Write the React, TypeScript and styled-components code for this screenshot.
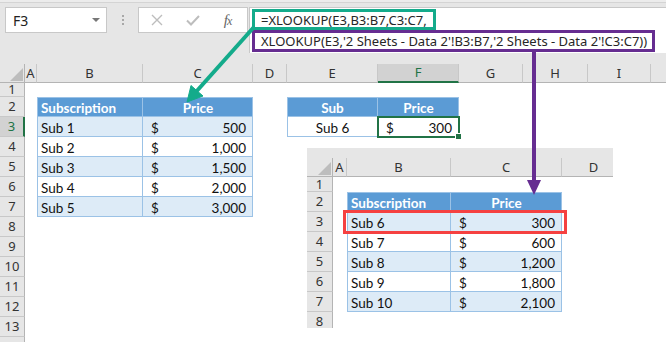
import { Fragment } from 'react'
import styled, { createGlobalStyle } from 'styled-components'

const GlobalStyle = createGlobalStyle`
  html, body { margin: 0; padding: 0; background: #fff; }
  #root { width: 666px; height: 342px; }
`

const CHROME = '#e6e6e6'
const LINE = '#c8c8c8'
const EDGE = '#b4b4b4'
const XL_GREEN = '#217346'
const TEAL = '#14ab8b'
const PURPLE = '#662d91'
const RED = '#f54141'
const BLUE = '#5b9bd5'
const BAND = '#ddebf7'
const TABLE_LINE = '#9bc2e6'
const UI_FONT = `'Noto Sans', 'Open Sans', sans-serif`
const CELL_FONT = `'Lato', 'Liberation Sans', sans-serif`

type Kind = 'head' | 'band' | 'plain'
type Align = 'left' | 'center' | 'money'
type CellSpec = { text: string; kind: Kind; align: Align; edgeL?: boolean; edgeT?: boolean; selected?: boolean }
type Col = { name: string; width: number }

const Page = styled.div`
  position: relative;
  width: 666px;
  height: 342px;
  overflow: hidden;
  background: ${CHROME};
  display: flex;
  flex-direction: column;
`

const TopBar = styled.div`
  flex: none;
  height: 53px;
  box-sizing: border-box;
  padding-top: 7px;
  display: flex;
  align-items: flex-start;
  background: linear-gradient(to bottom, #ececec 0 2px, #d4d4d4 2px 3px, ${CHROME} 3px);
`

const NameBox = styled.div`
  margin-left: 5px;
  width: 102px;
  height: 26px;
  box-sizing: border-box;
  border: 1px solid ${LINE};
  background: #fff;
  display: flex;
  align-items: center;
  justify-content: space-between;
  padding: 0 6px 0 7px;
  font: 14px ${UI_FONT};
  color: #222;
`

const DropArrow = styled.span`
  width: 0;
  height: 0;
  border-left: 4px solid transparent;
  border-right: 4px solid transparent;
  border-top: 4px solid #777;
`

const Grip = styled.div`
  width: 31px;
  padding-top: 8px;
  display: flex;
  flex-direction: column;
  align-items: center;
  gap: 2px;

  span {
    width: 2px;
    height: 2px;
    background: #a8a8a8;
  }
`

const ButtonBox = styled.div`
  width: 110px;
  height: 26px;
  box-sizing: border-box;
  border: 1px solid ${LINE};
  background: #fff;
  display: flex;
`

const IconSlot = styled.div<{ $dark?: boolean }>`
  width: 36px;
  display: flex;
  align-items: center;
  justify-content: center;
  color: ${p => (p.$dark ? '#666' : '#bdbdbd')};
`

const Fx = styled.span`
  font: italic 15px 'Liberation Serif', serif;
  letter-spacing: -1px;
  margin-right: 3px;

  small {
    font-size: 12px;
  }
`

const FormulaArea = styled.div`
  margin-left: 1px;
  flex: 1;
  height: 46px;
  box-sizing: border-box;
  border-top: 1px solid ${LINE};
  border-left: 1px solid ${LINE};
  background: #fff;
  padding: 1px 0 0 2px;
`

const FormulaLine = styled.div<{ $color: string; $width: number; $height: number }>`
  width: ${p => p.$width}px;
  height: ${p => p.$height}px;
  box-sizing: border-box;
  border: 3px solid ${p => p.$color};
  padding-left: 6px;
  display: flex;
  align-items: center;
  white-space: nowrap;
  font: 13px ${UI_FONT};
  color: #262626;
`

const SheetArea = styled.div`
  flex: none;
  padding-top: 11px;
`

const SheetGrid = styled.div<{ $cols: string; $rows: string }>`
  display: grid;
  grid-template-columns: ${p => p.$cols};
  grid-template-rows: ${p => p.$rows};
  background: #fff;
  font: 13px/1 ${UI_FONT};
  color: #333;
`

const Corner = styled.div`
  background: ${CHROME};
  border-right: 1px solid ${EDGE};
  border-bottom: 1px solid ${EDGE};
  display: flex;
  align-items: flex-end;
  justify-content: flex-end;
  padding: 0 1px 1px 0;
`

const ColHead = styled.div<{ $active: boolean }>`
  min-width: 0;
  background: ${p => (p.$active ? '#d2d2d2' : CHROME)};
  color: ${p => (p.$active ? XL_GREEN : '#333')};
  border-right: 1px solid ${LINE};
  border-bottom: ${p => (p.$active ? `2px solid ${XL_GREEN}` : `1px solid ${EDGE}`)};
  display: flex;
  align-items: center;
  justify-content: center;
  overflow: hidden;
`

const RowHead = styled.div<{ $active: boolean }>`
  background: ${p => (p.$active ? '#d2d2d2' : CHROME)};
  color: ${p => (p.$active ? XL_GREEN : '#333')};
  border-right: ${p => (p.$active ? `2px solid ${XL_GREEN}` : `1px solid ${EDGE}`)};
  border-bottom: 1px solid ${LINE};
  display: flex;
  align-items: center;
  justify-content: center;
  overflow: hidden;
`

const cellBg: Record<Kind, string> = { head: BLUE, band: BAND, plain: '#fff' }

const Cell = styled.div<{ $kind?: Kind; $align: Align; $edgeL?: boolean; $edgeT?: boolean }>`
  position: relative;
  min-width: 0;
  display: flex;
  align-items: center;
  justify-content: ${p => (p.$align === 'center' ? 'center' : p.$align === 'money' ? 'space-between' : 'flex-start')};
  padding: ${p => (p.$align === 'money' ? '1px 7px 0 8px' : '1px 4px 0')};
  background: ${p => (p.$kind ? cellBg[p.$kind] : '#fff')};
  color: ${p => (p.$kind === 'head' ? '#fff' : '#111')};
  font: ${p => (p.$kind === 'head' ? 700 : 400)} 13.5px ${CELL_FONT};
  white-space: nowrap;
  box-shadow: ${p =>
    p.$kind
      ? [
          `inset -1px -1px 0 ${TABLE_LINE}`,
          p.$edgeL ? `inset 1px 0 0 ${TABLE_LINE}` : '',
          p.$edgeT ? `inset 0 1px 0 ${TABLE_LINE}` : '',
        ]
          .filter(Boolean)
          .join(', ')
      : 'none'};
`

const Selection = styled.div`
  position: absolute;
  inset: -1px;
  border: 2px solid ${XL_GREEN};
  z-index: 2;

  &::after {
    content: '';
    position: absolute;
    right: -4px;
    bottom: -4px;
    width: 5px;
    height: 5px;
    background: ${XL_GREEN};
    border: 1px solid #fff;
  }
`

const InsetSheet = styled.div`
  position: absolute;
  left: 307px;
  top: 148px;
  width: 306px;
  height: 180px;
  box-sizing: border-box;
  padding-top: 10px;
  overflow: hidden;
  background: ${CHROME};
  z-index: 3;
`

const Highlight = styled.div`
  position: absolute;
  left: 36px;
  top: 62px;
  width: 224px;
  height: 24px;
  box-sizing: border-box;
  border: 3px solid ${RED};
`

const Arrows = styled.svg`
  position: absolute;
  left: 0;
  top: 0;
  z-index: 5;
  pointer-events: none;
`

function makeTable(
  row0: number,
  left: string,
  right: string,
  head: [string, string],
  body: [string, string][],
  nameAlign: Align,
  banded: boolean,
) {
  const cells: Record<string, CellSpec> = {}
  cells[left + row0] = { text: head[0], kind: 'head', align: nameAlign, edgeL: true, edgeT: true }
  cells[right + row0] = { text: head[1], kind: 'head', align: 'center', edgeT: true }
  body.forEach(([name, price], i) => {
    const kind: Kind = banded && i % 2 === 0 ? 'band' : 'plain'
    cells[left + (row0 + i + 1)] = { text: name, kind, align: nameAlign, edgeL: true }
    cells[right + (row0 + i + 1)] = { text: price, kind, align: 'money' }
  })
  return cells
}

const mainCells: Record<string, CellSpec> = {
  ...makeTable(
    2,
    'B',
    'C',
    ['Subscription', 'Price'],
    [
      ['Sub 1', '500'],
      ['Sub 2', '1,000'],
      ['Sub 3', '1,500'],
      ['Sub 4', '2,000'],
      ['Sub 5', '3,000'],
    ],
    'left',
    true,
  ),
  ...makeTable(2, 'E', 'F', ['Sub', 'Price'], [['Sub 6', '300']], 'center', false),
}
mainCells.F3 = { ...mainCells.F3, selected: true }

const dataCells = makeTable(
  2,
  'B',
  'C',
  ['Subscription', 'Price'],
  [
    ['Sub 6', '300'],
    ['Sub 7', '600'],
    ['Sub 8', '1,200'],
    ['Sub 9', '1,800'],
    ['Sub 10', '2,100'],
  ],
  'left',
  true,
)

const mainCols: Col[] = [
  { name: 'A', width: 12 },
  { name: 'B', width: 106 },
  { name: 'C', width: 110 },
  { name: 'D', width: 34 },
  { name: 'E', width: 91 },
  { name: 'F', width: 81 },
  { name: 'G', width: 64 },
  { name: 'H', width: 65 },
  { name: 'I', width: 63 },
  { name: 'J', width: 64 },
]

const dataCols: Col[] = [
  { name: 'A', width: 14 },
  { name: 'B', width: 104 },
  { name: 'C', width: 111 },
  { name: 'D', width: 64 },
]

type SheetProps = {
  headerWidth: number
  cols: Col[]
  rowHeights: number[]
  cells: Record<string, CellSpec>
  activeCol?: string
  activeRow?: number
}

function Sheet({ headerWidth, cols, rowHeights, cells, activeCol, activeRow }: SheetProps) {
  const colTemplate = [headerWidth, ...cols.map(c => c.width)].map(w => `${w}px`).join(' ')
  const rowTemplate = [19, ...rowHeights].map(h => `${h}px`).join(' ')
  return (
    <SheetGrid $cols={colTemplate} $rows={rowTemplate}>
      <Corner>
        <svg width="13" height="13" viewBox="0 0 13 13">
          <polygon points="13,0 13,13 0,13" fill="#bdbdbd" />
        </svg>
      </Corner>
      {cols.map(c => (
        <ColHead key={c.name} $active={c.name === activeCol}>
          {c.name}
        </ColHead>
      ))}
      {rowHeights.map((_, i) => {
        const row = i + 1
        return (
          <Fragment key={row}>
            <RowHead $active={row === activeRow}>{row}</RowHead>
            {cols.map(c => {
              const spec = cells[c.name + row]
              if (!spec) return <Cell key={c.name} $align="left" />
              return (
                <Cell key={c.name} $kind={spec.kind} $align={spec.align} $edgeL={spec.edgeL} $edgeT={spec.edgeT}>
                  {spec.align === 'money' ? (
                    <>
                      <span>$</span>
                      <span>{spec.text}</span>
                    </>
                  ) : (
                    spec.text
                  )}
                  {spec.selected && <Selection />}
                </Cell>
              )
            })}
          </Fragment>
        )
      })}
    </SheetGrid>
  )
}

export default function App() {
  return (
    <Page>
      <GlobalStyle />
      <TopBar>
        <NameBox>
          F3
          <DropArrow />
        </NameBox>
        <Grip>
          <span />
          <span />
          <span />
        </Grip>
        <ButtonBox>
          <IconSlot>
            <svg width="12" height="12" viewBox="0 0 12 12">
              <path d="M1 1L11 11M11 1L1 11" stroke="currentColor" strokeWidth="1.4" fill="none" />
            </svg>
          </IconSlot>
          <IconSlot>
            <svg width="14" height="11" viewBox="0 0 14 11">
              <path d="M1 5.5L5 9.5L13 1" stroke="currentColor" strokeWidth="2" fill="none" />
            </svg>
          </IconSlot>
          <IconSlot $dark>
            <Fx>
              f<small>x</small>
            </Fx>
          </IconSlot>
        </ButtonBox>
        <FormulaArea>
          <FormulaLine $color={TEAL} $width={184} $height={21}>
            =XLOOKUP(E3,B3:B7,C3:C7,
          </FormulaLine>
          <FormulaLine $color={PURPLE} $width={403} $height={22}>
            XLOOKUP(E3,'2 Sheets - Data 2'!B3:B7,'2 Sheets - Data 2'!C3:C7))
          </FormulaLine>
        </FormulaArea>
      </TopBar>
      <SheetArea>
        <Sheet
          headerWidth={25}
          cols={mainCols}
          rowHeights={[14, 20, 20, 20, 20, 20, 20, 20, 20, 20, 20, 20, 20, 20]}
          cells={mainCells}
          activeCol="F"
          activeRow={3}
        />
      </SheetArea>
      <InsetSheet>
        <Sheet headerWidth={26} cols={dataCols} rowHeights={[15, 20, 20, 20, 20, 20, 20, 20]} cells={dataCells} />
        <Highlight />
      </InsetSheet>
      <Arrows width="666" height="342" viewBox="0 0 666 342">
        <line x1="254" y1="27" x2="195" y2="93" stroke={TEAL} strokeWidth="4" />
        <polygon points="187,102 203,96 191,85.5" fill={TEAL} stroke={TEAL} strokeWidth="1" strokeLinejoin="round" />
        <line x1="534" y1="51" x2="534" y2="182" stroke={PURPLE} strokeWidth="4" />
        <polygon points="534,195 527,180 541,180" fill={PURPLE} />
      </Arrows>
    </Page>
  )
}
